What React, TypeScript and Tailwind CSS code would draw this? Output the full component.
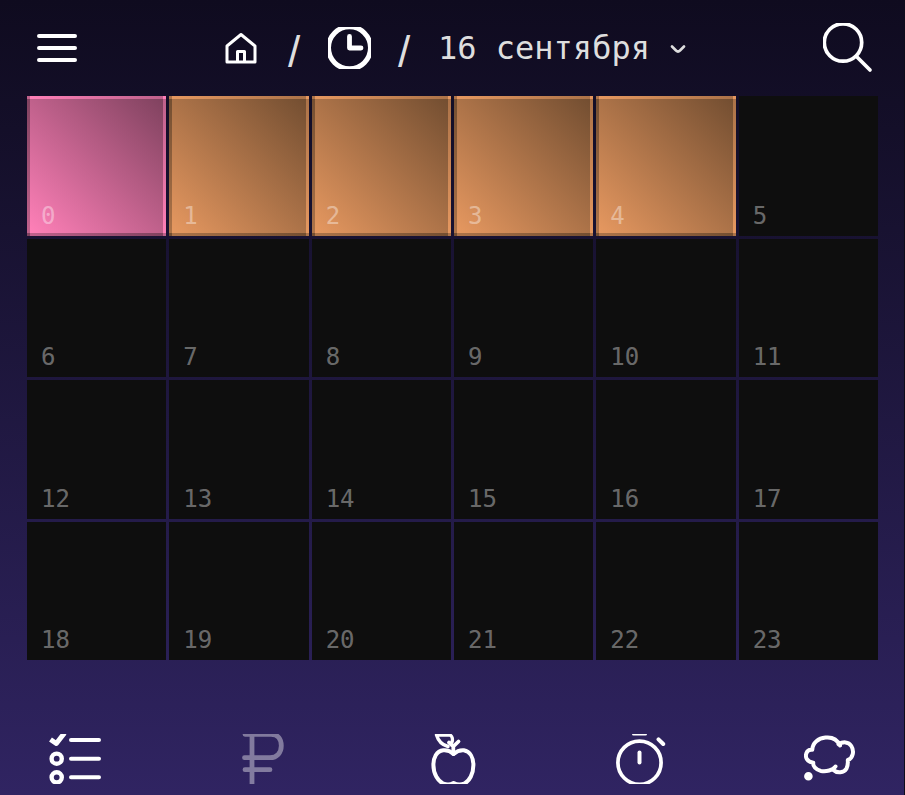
import type { ReactNode } from "react";
import { clsx } from "clsx";

/**
 * Day view of the planner: a breadcrumb header, one tile per hour,
 * and the bottom navigation.
 */

type Tone = "pink" | "orange" | "empty";

const HOURS: { hour: number; tone: Tone }[] = Array.from({ length: 24 }, (_, hour) => ({
  hour,
  tone: hour === 0 ? "pink" : hour < 5 ? "orange" : "empty",
}));

// The transparent border lets the gradient wrap around, which gives the bevel.
const TONES: Record<Tone, string> = {
  pink: "bg-[linear-gradient(45deg,#ff80b8,#80425f)] text-white/40",
  orange: "bg-[linear-gradient(45deg,#e69860,#734e31)] text-white/40",
  empty: "bg-[#0e0e0e] text-white/40",
};

interface IconProps {
  viewBox: string;
  className: string;
  width?: number;
  children: ReactNode;
}

function Icon({ viewBox, className, width = 4, children }: IconProps) {
  return (
    <svg
      viewBox={viewBox}
      className={clsx("block shrink-0", className)}
      fill="none"
      stroke="currentColor"
      strokeWidth={width}
      strokeLinecap="round"
      strokeLinejoin="round"
      aria-hidden="true"
    >
      {children}
    </svg>
  );
}

function Slash() {
  return (
    <span className="w-[13px] pt-2 font-['Liberation_Sans',sans-serif] text-[44px] leading-[48px] text-[#dedede]">
      /
    </span>
  );
}

function Header() {
  return (
    <header className="flex h-24 items-center justify-between pl-8 pr-[31px]">
      <button type="button" aria-label="Меню">
        <Icon viewBox="0 0 50 50" className="size-[50px]">
          <path d="M7 13H43M7 25H43M7 37H43" />
        </Icon>
      </button>

      <nav className="ml-[6px] flex items-center gap-[27px]" aria-label="Навигация">
        <a href="#home" aria-label="Домой" className="mr-1">
          <Icon viewBox="0 0 32 32" className="size-8" width={3}>
            <path d="M2 30V14L16 2.5L30 14V30ZM12.5 30V19.5H19.5V30" />
          </Icon>
        </a>
        <Slash />
        <a href="#day" aria-label="День">
          <Icon viewBox="0 0 43 42" className="h-[42px] w-[43px]" width={5}>
            <circle cx="21.5" cy="20.8" r="21" />
            <path d="M21.5 9.5V21H33" strokeWidth="4.8" />
          </Icon>
        </a>
        <Slash />
        <div className="relative">
          <select
            aria-label="Дата"
            className="block appearance-none bg-transparent pr-9 text-[32px] leading-10 text-[#dedede]"
          >
            <option>16 сентября</option>
          </select>
          <Icon
            viewBox="0 0 16 10"
            className="pointer-events-none absolute right-0 top-4 h-[10px] w-4 text-[#dedede]"
            width={2.6}
          >
            <path d="M2 2.5L6 6.5Q8 8.5 10 6.5L14 2.5" />
          </Icon>
        </div>
      </nav>

      <button type="button" aria-label="Поиск">
        <Icon viewBox="0 0 50 50" className="size-[50px]" width={3.7}>
          <circle cx="20" cy="19.5" r="18.7" />
          <path d="M33.5 33.5L47 47" />
        </Icon>
      </button>
    </header>
  );
}

function HourGrid() {
  return (
    <main className="ml-[27px] mr-[26px] grid aspect-[851/564] grid-cols-6 grid-rows-[140fr_138fr_139fr_138fr] gap-[3px]">
      {HOURS.map(({ hour, tone }) => (
        <button
          key={hour}
          type="button"
          className={clsx(
            "flex min-h-0 items-end border-[3px] border-transparent pb-[5px] pl-[11px] text-2xl leading-6",
            TONES[tone],
          )}
        >
          {hour}
        </button>
      ))}
    </main>
  );
}

function BottomNav() {
  return (
    <nav className="mt-auto flex justify-between pb-[11px] pl-[49px] pr-12" aria-label="Разделы">
      <button type="button" aria-label="Задачи">
        <Icon viewBox="0 0 52 50" className="h-[50px] w-[52px]">
          <path d="M22 6H50M22 24.7H50M22 43.3H50" />
          <path d="M1.5 5.5L7.3 9.5L15.5 -1" strokeWidth="5" strokeLinecap="butt" />
          <circle cx="7.7" cy="24.7" r="5.1" strokeWidth="4.4" />
          <circle cx="7.7" cy="43.3" r="5.1" strokeWidth="4.4" />
        </Icon>
      </button>
      <button type="button" aria-label="Финансы" className="opacity-40">
        <Icon viewBox="0 0 50 50" className="size-[50px]" width={4.8}>
          <path d="M6 0.3H32C39 0.3 42.3 5 42.3 11.8C42.3 18.6 38 23.7 31 23.7H5.5M6 35.7H31" />
          <path d="M13 0V50" strokeLinecap="butt" />
        </Icon>
      </button>
      <button type="button" aria-label="Питание">
        <Icon viewBox="0 0 50 50" className="size-[50px]">
          <path d="M25.6 20C22.3 17 18.3 16 15.3 16.3C8.3 17 5.4 24 5.4 31C5.4 40 10 47 15.3 49.7C18.3 50.8 22.3 51 25.6 49C29 51 33.3 50.8 36.3 49.7C41.3 47 45.4 40 45.4 31C45.4 24 42.3 17.5 35.8 16.3C32.3 16 29 17 25.6 20Z" />
          <path d="M25.3 20V12.5L30.5 7.5M25.5 12.5L21 8.5" strokeWidth="3.8" />
          <path d="M8.5 1C10 6 14 11 20 12.5M8.5 1H22C24 2 25 5 24 8" strokeWidth="3.4" />
        </Icon>
      </button>
      <button type="button" aria-label="Таймер">
        <Icon viewBox="0 0 50 50" className="size-[50px]">
          <circle cx="23.5" cy="28.7" r="21.6" strokeWidth="3.7" />
          <path d="M23.5 18.5V28.5" />
          <path d="M17.5 0H29.5" strokeWidth="3" />
          <path d="M42.5 5.3L47.2 10" strokeWidth="4" />
        </Icon>
      </button>
      <button type="button" aria-label="Мысли">
        <Icon viewBox="0 0 52 50" className="h-[50px] w-[52px]">
          <path
            d="M8 15.8C2 15 1 22 2.8 25C4 27.3 6.5 28.5 9.3 28.8C8.5 32 12 36 17 37C22 37.8 29 36.5 31.5 32.5M29.5 36C33 39.5 40 39 42.5 34.5C44 31.5 44 29 43.8 26C49 24.5 50.5 17 47.3 12C44.5 7.5 39 7.5 34.5 10.3M36 11.5C33 5 27 3 21.5 3.6C14.5 4.3 8.5 8.5 8.3 15.8"
          />
          <circle cx="4.4" cy="42.3" r="2.2" strokeWidth="4.2" />
        </Icon>
      </button>
    </nav>
  );
}

export default function App() {
  return (
    <div className="flex min-h-screen flex-col border-r border-[#0f0c1c] bg-linear-to-b from-[#0f0b1f] to-[#302462] font-['DejaVu_Sans_Mono','Liberation_Mono',monospace] text-white">
      <Header />
      <HourGrid />
      <BottomNav />
    </div>
  );
}
